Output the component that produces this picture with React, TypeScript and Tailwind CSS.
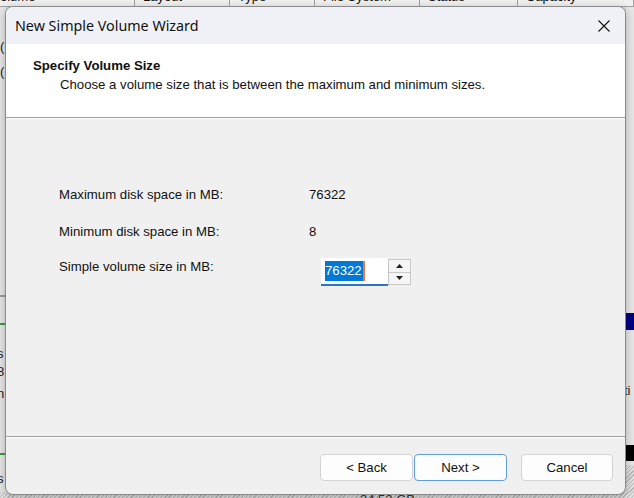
import React from "react";

const headers = [
  { t: "Volume", w: 135, pad: -8 },
  { t: "Layout", w: 95, pad: 8 },
  { t: "Type", w: 85, pad: 8 },
  { t: "File System", w: 105, pad: 8 },
  { t: "Status", w: 98, pad: 8 },
  { t: "Capacity", w: 116, pad: 8 },
];

function SpinArrow({ up }: { up: boolean }) {
  return (
    <svg width="7" height="4" viewBox="0 0 7 4">
      {up ? <path d="M3.5 0 L7 4 L0 4 Z" fill="#222" /> : <path d="M0 0 L7 0 L3.5 4 Z" fill="#222" />}
    </svg>
  );
}

export default function App() {
  const body = { fontFamily: '"Liberation Sans", Arial, sans-serif' };
  return (
    <div className="relative w-[634px] h-[498px] overflow-hidden bg-[#d9d9d9]" style={body}>
      {/* background window */}
      <div className="flex h-[7px] items-end overflow-hidden bg-[#f0f0f0] border-b border-[#a0a0a0]">
        {headers.map((h, i) => (
          <div
            key={i}
            className="h-[16px] shrink-0 border-r border-[#a0a0a0] text-[13px] leading-[14px] text-[#111] whitespace-nowrap overflow-hidden"
            style={{ width: h.w, paddingLeft: h.pad > 0 ? h.pad : 0, textIndent: h.pad < 0 ? h.pad : 0 }}
          >
            {h.t}
          </div>
        ))}
      </div>
      <div className="absolute left-0 top-[7px] w-[6px] h-[491px] bg-[#e6e6e6] text-[13px] text-[#222] leading-none">
        <div className="absolute left-0 top-[33px]">(</div>
        <div className="absolute left-0 top-[58px]">(</div>
        <div className="absolute left-0 top-[288px] w-[6px] h-[2px] bg-[#9a9a9a]" />
        <div className="absolute left-0 top-[316px] w-[6px] h-[2px] bg-[#3a9a3a]" />
        <div className="absolute left-[-3px] top-[340px]">s</div>
        <div className="absolute left-[-3px] top-[358px]">8</div>
        <div className="absolute left-[-3px] top-[380px]">n</div>
        <div className="absolute left-0 top-[446px] w-[6px] h-[2px] bg-[#3a9a3a]" />
        <div className="absolute left-[-3px] top-[465px]">s</div>
      </div>
      <div className="absolute left-[626px] top-[7px] w-[8px] h-[491px] bg-[#e6e6e6] text-[13px] text-[#222] leading-none">
        <div className="absolute left-0 top-[306px] w-[8px] h-[17px] bg-[#000080]" />
        <div className="absolute left-[-2px] top-[377px]">ti</div>
        <div className="absolute left-0 top-[438px] w-[8px] h-[16px] bg-[#000]" />
        <div className="absolute left-0 top-[458px] w-[8px] h-[40px] bg-[repeating-linear-gradient(135deg,#b8b8b8_0px,#b8b8b8_1px,#e0e0e0_1px,#e0e0e0_3px)]" />
      </div>
      <div className="absolute left-0 top-[492px] w-[634px] h-[6px] bg-[repeating-linear-gradient(135deg,#b8b8b8_0px,#b8b8b8_1px,#e0e0e0_1px,#e0e0e0_3px)]">
        <div className="absolute left-[360px] top-[1px] text-[13px] leading-none text-[#333]">24.52 GB</div>
      </div>

      {/* dialog */}
      <div className="absolute left-[5px] top-[6px] w-[621px] h-[489px] rounded-[8px] border border-[#8a8a8a] bg-[#f0f0f0] overflow-hidden flex flex-col shadow-[0_2px_8px_rgba(0,0,0,0.25)]">
        {/* title bar */}
        <div className="h-[37px] shrink-0 bg-[#eff1f7] flex items-center justify-between pl-[9px] pr-[14px]">
          <span className="text-[14.3px] text-[#111]" style={{ fontFamily: '"Noto Sans", "Open Sans", sans-serif' }}>
            New Simple Volume Wizard
          </span>
          <svg width="12" height="12" viewBox="0 0 12 12" className="mr-[1px]">
            <path d="M0.5 0.5 L11.5 11.5 M11.5 0.5 L0.5 11.5" stroke="#111" strokeWidth="1.1" />
          </svg>
        </div>
        {/* header */}
        <div className="h-[74px] shrink-0 bg-white border-b border-[#a0a0a0] pl-[27px] pt-[14px] text-[13.2px]">
          <div className="font-bold text-[#111] leading-[16px]">Specify Volume Size</div>
          <div className="text-[#111] leading-[16px] mt-[3px] pl-[27px]">
            Choose a volume size that is between the maximum and minimum sizes.
          </div>
        </div>
        {/* body */}
        <div className="flex-1 border-t border-white pl-[53px] pt-[67px] text-[13.2px] text-[#111]">
          <div className="flex items-center h-[18px]">
            <span className="w-[250px]">Maximum disk space in MB:</span>
            <span>76322</span>
          </div>
          <div className="flex items-center h-[18px] mt-[19px]">
            <span className="w-[250px]">Minimum disk space in MB:</span>
            <span>8</span>
          </div>
          <div className="flex items-start h-[28px] mt-[17px]">
            <span className="w-[262px] h-[18px] leading-[18px]">Simple volume size in MB:</span>
            <div className="flex items-start">
              <div className="w-[67px] h-[28px] bg-white border-b-2 border-[#2f73c6] flex items-center pl-[4px]">
                <span className="bg-[#0078d7] text-white leading-[20px] pr-[1px] border-r-2 border-[#e07a3a]">76322</span>
              </div>
              <div className="w-[23px] h-[26px] flex flex-col bg-white border border-[#c8c8c8] mt-[1px]">
                <div className="flex-1 flex items-center justify-center bg-[#f5f5f5] border-b border-[#c8c8c8]">
                  <SpinArrow up />
                </div>
                <div className="flex-1 flex items-center justify-center bg-[#f5f5f5]">
                  <SpinArrow up={false} />
                </div>
              </div>
            </div>
          </div>
        </div>
        {/* footer */}
        <div className="h-[58px] shrink-0 border-t border-[#a0a0a0] shadow-[inset_0_1px_0_#ffffff] flex items-start justify-end pt-[17px] pr-[12px] text-[13.2px] text-[#111]">
          <button className="w-[93px] h-[27px] rounded-[4px] border border-[#d3d3d3] bg-[#fdfdfd]">&lt; Back</button>
          <button className="w-[93px] h-[27px] rounded-[4px] border border-[#5e9ee0] bg-[#fdfdfd] ml-[1px]">Next &gt;</button>
          <button className="w-[92px] h-[27px] rounded-[4px] border border-[#d3d3d3] bg-[#fdfdfd] ml-[14px]">Cancel</button>
        </div>
      </div>
    </div>
  );
}
